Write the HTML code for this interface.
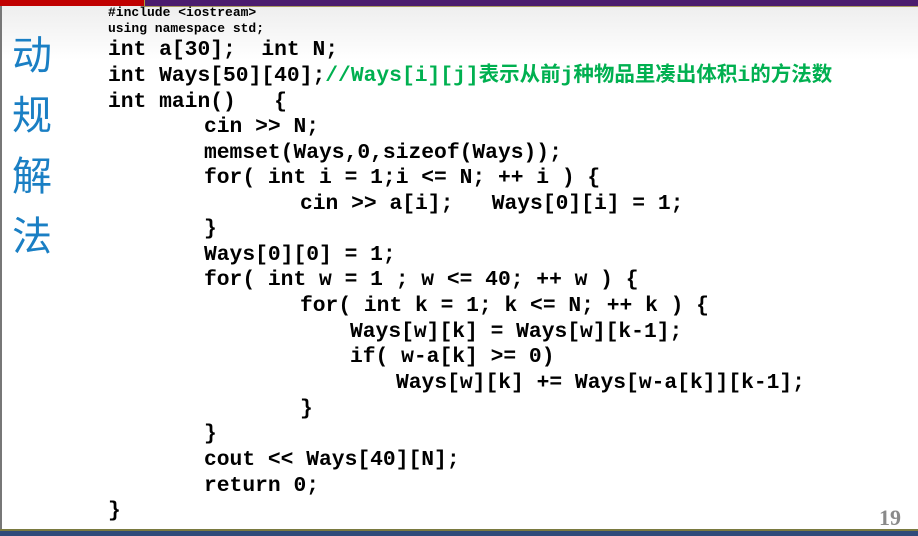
<!DOCTYPE html>
<html><head><meta charset="utf-8"><style>
html,body{margin:0;padding:0}
body{width:918px;height:536px;position:relative;overflow:hidden;background:linear-gradient(#ececec 0px,#fff 60px,#fff 100%);font-family:"Liberation Mono","Noto Sans CJK SC",monospace;}
.topr{position:absolute;left:0;top:0;width:144px;height:6px;background:#c00000}
.topp{position:absolute;left:144px;top:0;width:774px;height:6px;background:#4b1c6e;border-left:1px solid #b09a40}
.gold{position:absolute;left:144px;top:6px;width:774px;height:1px;background:#a89860}
.lb{position:absolute;left:0;top:6px;width:2px;height:524px;background:#777}
.bot{position:absolute;left:0;top:529px;width:918px;height:7px;background:#2f4a7a;border-top:2px solid #7a7a40;box-sizing:border-box}
.l{position:absolute;font-weight:bold;font-size:21.3px;line-height:22px;white-space:pre;color:#000}
.s{font-size:13px;line-height:14px}
.g{color:#00b050}
.cj{font-family:"Noto Sans CJK SC","WenQuanYi Zen Hei",sans-serif;font-size:20.5px;line-height:1px}
.k{position:absolute;left:12px;font-family:"Noto Sans CJK SC","WenQuanYi Zen Hei",sans-serif;font-size:40px;line-height:44px;color:#1a7fc4}
.n{position:absolute;left:879px;top:505px;font-family:"Liberation Serif",serif;font-weight:bold;font-size:22px;color:#8a8a8a}
</style></head><body>
<div class="topr"></div><div class="topp"></div><div class="gold"></div><div class="lb"></div>
<div class="k" style="top:30px">动</div>
<div class="k" style="top:90px">规</div>
<div class="k" style="top:151px">解</div>
<div class="k" style="top:211px">法</div>
<div class="l s" style="left:108px;top:6px">#include &lt;iostream&gt;</div>
<div class="l s" style="left:108px;top:22px">using namespace std;</div>
<div class="l" style="left:108px;top:39px">int a[30];  int N;</div>
<div class="l" style="left:108px;top:65px;height:22px">int Ways[50][40];<span class="g">//Ways[i][j]<span class="cj">表示从前</span>j<span class="cj">种物品里凑出体积</span>i<span class="cj">的方法数</span></span></div>
<div class="l" style="left:108px;top:91px">int main()   {</div>
<div class="l" style="left:204px;top:116px">cin &gt;&gt; N;</div>
<div class="l" style="left:204px;top:142px">memset(Ways,0,sizeof(Ways));</div>
<div class="l" style="left:204px;top:167px">for( int i = 1;i &lt;= N; ++ i ) {</div>
<div class="l" style="left:300px;top:193px">cin &gt;&gt; a[i];   Ways[0][i] = 1;</div>
<div class="l" style="left:204px;top:218px">}</div>
<div class="l" style="left:204px;top:244px">Ways[0][0] = 1;</div>
<div class="l" style="left:204px;top:269px">for( int w = 1 ; w &lt;= 40; ++ w ) {</div>
<div class="l" style="left:300px;top:295px">for( int k = 1; k &lt;= N; ++ k ) {</div>
<div class="l" style="left:350px;top:321px">Ways[w][k] = Ways[w][k-1];</div>
<div class="l" style="left:350px;top:346px">if( w-a[k] &gt;= 0)</div>
<div class="l" style="left:396px;top:372px">Ways[w][k] += Ways[w-a[k]][k-1];</div>
<div class="l" style="left:300px;top:398px">}</div>
<div class="l" style="left:204px;top:423px">}</div>
<div class="l" style="left:204px;top:449px">cout &lt;&lt; Ways[40][N];</div>
<div class="l" style="left:204px;top:475px">return 0;</div>
<div class="l" style="left:108px;top:500px">}</div>
<div class="n">19</div>
<div class="bot"></div>
</body></html>
